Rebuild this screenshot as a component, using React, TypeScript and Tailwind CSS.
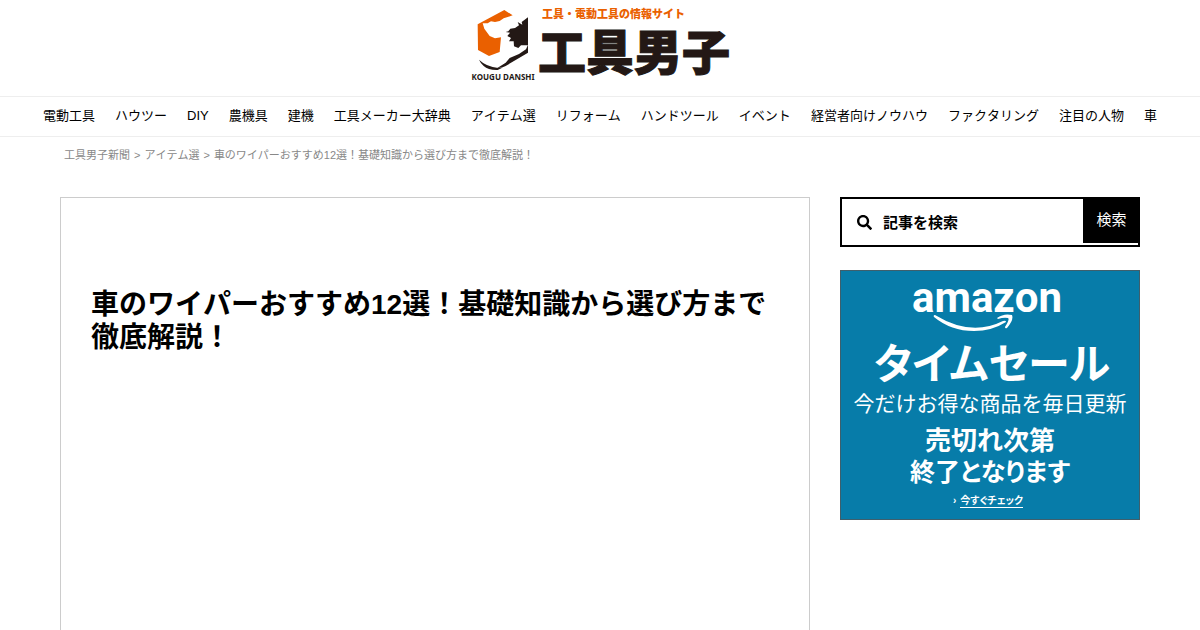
import { FaSearch } from 'react-icons/fa';

const navItems = [
  '電動工具',
  'ハウツー',
  'DIY',
  '農機具',
  '建機',
  '工具メーカー大辞典',
  'アイテム選',
  'リフォーム',
  'ハンドツール',
  'イベント',
  '経営者向けノウハウ',
  'ファクタリング',
  '注目の人物',
  '車',
];

const title = '車のワイパーおすすめ12選！基礎知識から選び方まで徹底解説！';

function LogoMark() {
  return (
    <svg viewBox="36 27 156 186" className="w-[52px] h-[62px]" aria-hidden="true">
      <path
        fill="#ea6000"
        d="M38 73 L118 30 L143 46 L116 55 L104 63 L90 66 L78 64 L68 70 L53 70 L58 86 L74 108 L90 115 L108 112 L104 156 L72 168 L39 150 Z"
      />
      <path
        fill="#231815"
        d="M189 52 L170 66 L172 74 L158 66 L162 76 L150 84 L136 86 L130 94 L122 96 L135 98 L127 108 L138 114 L132 124 L146 124 L147 139 L160 144 L168 136 L189 135 Z M189 134 L189 158 L122 198 Q110 205 97 204 L122 188 L134 174 L162 162 L183 148 Z"
      />
      <path fill="#231815" d="M42 179 Q64 200 100 204 L112 203 L98 210 Q70 211 56 198 Q47 190 42 179 Z" />
    </svg>
  );
}

function Header() {
  return (
    <header className="flex justify-center h-24 pt-2">
      <a href="#" className="flex items-start text-[#231815]">
        <span className="flex flex-col items-center pt-px w-[62px]">
          <LogoMark />
          <span className="font-['Noto_Sans',sans-serif] text-[8px] leading-3 font-bold whitespace-nowrap">
            KOUGU DANSHI
          </span>
        </span>
        <span className="flex flex-col w-[194px] pl-1">
          <span className="pl-1 text-[11px] leading-3 font-black text-[#ea6000] whitespace-nowrap">
            工具・電動工具の情報サイト
          </span>
          <span className="text-[48px] leading-[68px] font-black whitespace-nowrap [-webkit-text-stroke:1px_#231815]">
            工具男子
          </span>
        </span>
      </a>
    </header>
  );
}

function Nav() {
  return (
    <nav className="border-y border-[#eee] overflow-hidden">
      <ul className="flex justify-center gap-5 pb-0.5 text-[13px] leading-[37px] whitespace-nowrap">
        {navItems.map((item) => (
          <li key={item}>
            <a href="#">{item}</a>
          </li>
        ))}
      </ul>
    </nav>
  );
}

function Breadcrumb() {
  return (
    <div className="w-full max-w-[1080px] mx-auto px-1 pt-2 flex gap-1 text-[11px] leading-5 text-[#888]">
      <a href="#">工具男子新聞</a>
      <span>&gt;</span>
      <a href="#">アイテム選</a>
      <span>&gt;</span>
      <span>{title}</span>
    </div>
  );
}

function SearchForm() {
  return (
    <form className="flex items-start h-[50px] border-2 border-black" onSubmit={(e) => e.preventDefault()}>
      <label htmlFor="search" className="flex items-center self-stretch pl-[15px] pr-[11px]">
        <FaSearch size={15} aria-label="記事を検索" />
      </label>
      <input
        id="search"
        type="text"
        placeholder="記事を検索"
        className="flex-1 min-w-0 self-stretch pt-0.5 text-[15px] font-bold outline-none placeholder:text-black placeholder:opacity-100"
      />
      <button type="submit" className="w-[57px] h-11 pb-0.5 -mr-0.5 bg-black text-white text-[15px]">
        検索
      </button>
    </form>
  );
}

function AmazonLogo() {
  return (
    <svg viewBox="-10 -10 170 60" className="w-[170px] h-[60px]" role="img" aria-label="amazon">
      <text
        x="72"
        y="31"
        textAnchor="middle"
        fill="#fff"
        className="font-['Roboto',sans-serif] text-[42px] font-bold"
      >
        amazon
      </text>
      <path
        fill="#fff"
        d="M20 34 Q56 56 88 40 Q91 39 91 41 Q77 50 59 50 Q36 50 19 36 Q18 34 20 34 Z M82 37 Q89 32 97 34 Q99 39 92 47 Q90 48 90 46 Q95 38 93 37 Q89 36 83 38 Z"
      />
    </svg>
  );
}

function Banner() {
  return (
    <a
      href="#"
      className="flex flex-col items-center h-[250px] border border-[#3f5f6c] bg-[#077ca9] text-white whitespace-nowrap"
    >
      <AmazonLogo />
      <span className="pt-1 pl-1 text-[42px] leading-[60px] font-bold [font-feature-settings:'palt']">
        タイムセール
      </span>
      <span className="text-[21px] leading-[18px]">今だけお得な商品を毎日更新</span>
      <span className="pt-3 text-[26px] leading-8 font-bold">売切れ次第</span>
      <span className="text-[25px] leading-[30px] font-bold [font-feature-settings:'palt']">終了となります</span>
      <span className="flex gap-1 pt-2 pr-1 text-[10px] leading-3 font-bold">
        <span>›</span>
        <span className="border-b border-white [font-feature-settings:'palt']">今すぐチェック</span>
      </span>
    </a>
  );
}

export default function App() {
  return (
    <div className="min-h-screen flex flex-col bg-white text-black font-['Liberation_Sans','Noto_Sans_CJK_JP',sans-serif] [font-kerning:none]">
      <Header />
      <Nav />
      <Breadcrumb />
      <main className="flex-1 flex gap-[30px] w-full max-w-[1080px] mx-auto pt-8">
        <article className="flex-1 min-w-0 px-[30px] pt-[90px] border border-b-0 border-[#ccc]">
          <h1 className="text-[28px] leading-[33px] font-bold">{title}</h1>
        </article>
        <aside className="w-[300px] shrink-0 flex flex-col gap-[23px]">
          <SearchForm />
          <Banner />
        </aside>
      </main>
    </div>
  );
}
